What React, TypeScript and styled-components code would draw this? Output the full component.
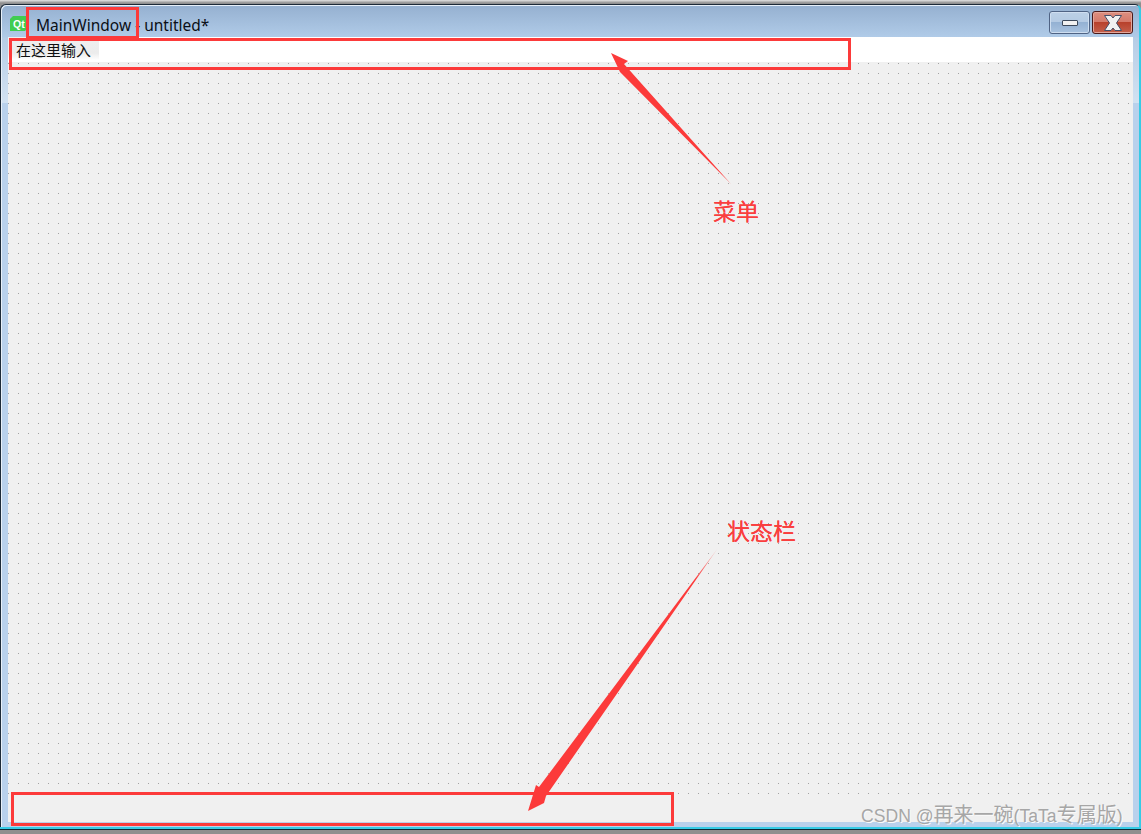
import React from 'react';
import styled, { createGlobalStyle } from 'styled-components';

const GlobalStyle = createGlobalStyle`
  html, body {
    margin: 0;
    padding: 0;
    background: #9a9a9a;
  }
  body {
    font-family: "Liberation Sans", "Noto Sans CJK SC", sans-serif;
  }
`;

const Page = styled.div`
  position: relative;
  width: 1141px;
  height: 834px;
  overflow: hidden;
  background: linear-gradient(#e4e4e4 0, #8f8f8f 3px);
  padding-top: 4px;
  box-sizing: border-box;
`;

const Frame = styled.div`
  width: 1141px;
  height: 826px;
  box-sizing: border-box;
  display: flex;
  flex-direction: column;
  border: 1px solid #1d2a38;
  border-right: 2px solid #36cbe6;
  border-radius: 6px 6px 0 0;
  box-shadow: inset 1px 1px 0 0 #e8f0f8;
  background: linear-gradient(
    #95b0d0 0,
    #b0cbe8 32px,
    #b6cde6 33px,
    #d2e2f2 98px,
    #b9d1ec 98px,
    #b9d1ec 100%
  );
  padding: 1px 6px 0 7px;
`;

const TitleBar = styled.div`
  height: 31px;
  flex: none;
  display: flex;
  justify-content: space-between;
  padding-left: 2px;
  box-sizing: border-box;
`;

const TitleLeft = styled.div`
  align-self: flex-end;
  display: flex;
  align-items: center;
  gap: 8px;
  padding-bottom: 4px;
`;

const TitleText = styled.span`
  font-family: "Noto Sans", sans-serif;
  font-size: 15.5px;
  line-height: 15px;
  color: #0b0f16;
  margin-top: 4px;
`;

const WindowButtons = styled.div`
  align-self: flex-start;
  display: flex;
  gap: 2px;
  margin-top: 5px;
`;

const WindowButton = styled.div<{ $close?: boolean }>`
  width: 41px;
  height: 23px;
  box-sizing: border-box;
  display: flex;
  align-items: center;
  justify-content: center;
  border: 1px solid ${(p) => (p.$close ? '#4a1a1a' : '#4f6384')};
  border-radius: 3px;
  box-shadow: inset 0 0 0 1px ${(p) => (p.$close ? '#e3a79c' : '#cfdef0')};
  background: ${(p) =>
    p.$close
      ? 'linear-gradient(#dd8f80 0, #d4796a 48%, #b8412c 50%, #c4604c 100%)'
      : 'linear-gradient(#bcd0e6 0, #b4cae3 48%, #94b1d3 50%, #a9c3e0 100%)'};
`;

const MinimizeGlyph = styled.div`
  width: 16px;
  height: 6px;
  box-sizing: border-box;
  background: #f2f2f2;
  border: 1px solid #3d4a5c;
  border-radius: 1px;
`;

const Client = styled.div`
  flex: 1;
  display: flex;
  flex-direction: column;
  margin-bottom: 7px;
  min-height: 0;
`;

const MenuBar = styled.div`
  height: 25px;
  flex: none;
  background: #ffffff;
  display: flex;
`;

const MenuInput = styled.div`
  height: 23px;
  width: 91px;
  box-sizing: border-box;
  padding: 4px 0 0 8px;
  font-family: "Noto Sans CJK SC", sans-serif;
  font-size: 15px;
  line-height: 18px;
  color: #101010;
  background: linear-gradient(#efefef 0, #ececec 70%, #ffffff 100%);
`;

const Canvas = styled.div`
  flex: 1;
  background-color: #f0f0f0;
  background-image: radial-gradient(circle at 0.5px 0.5px, #a2a2a2 0.7px, transparent 0.7px);
  background-size: 10px 10px;
  background-position: 0 1px;
`;

const StatusBar = styled.div`
  height: 28px;
  flex: none;
  background: #f0f0f0;
`;

const BottomEdge = styled.div`
  position: absolute;
  left: 0;
  right: 0;
  top: 827px;
  height: 3px;
  background: linear-gradient(#36cbe6 0, #36cbe6 2px, #0e2a38 2px);
`;

const RedBox = styled.div<{ $x: number; $y: number; $w: number; $h: number }>`
  position: absolute;
  left: ${(p) => p.$x}px;
  top: ${(p) => p.$y}px;
  width: ${(p) => p.$w}px;
  height: ${(p) => p.$h}px;
  box-sizing: border-box;
  border: 3px solid #fc3a3a;
`;

const Arrows = styled.svg`
  position: absolute;
  left: 0;
  top: 0;
  width: 1141px;
  height: 834px;
  pointer-events: none;
`;

const Note = styled.div<{ $x: number; $y: number }>`
  position: absolute;
  left: ${(p) => p.$x}px;
  top: ${(p) => p.$y}px;
  font-family: "Noto Sans CJK SC", sans-serif;
  font-size: 23px;
  line-height: 30px;
  color: #fa3e3e;
  text-shadow: 0 0 0.5px #fa3e3e;
`;

const Watermark = styled.div`
  position: absolute;
  left: 861px;
  top: 802px;
  font-family: "Liberation Sans", sans-serif;
  font-size: 17.6px;
  line-height: 24px;
  color: #a6a6a6;
  text-shadow: 1px 1px 0 #fafafa;
  white-space: nowrap;
`;

const WatermarkCjk = styled.span`
  font-family: "Noto Sans CJK SC", sans-serif;
  font-size: 20px;
`;

const GlyphSvg = styled.svg`
  display: block;
`;

function QtLogo() {
  return (
    <GlyphSvg width="18" height="15" viewBox="0 0 18 15">
      <path d="M3 0H18V12L15 15H0V3Z" fill="#41cd52" />
      <text x="3" y="11.5" fontFamily="Liberation Sans" fontSize="10.5" fontWeight="bold" fill="#ffffff">
        Qt
      </text>
    </GlyphSvg>
  );
}

function CloseGlyph() {
  return (
    <GlyphSvg width="20" height="18" viewBox="0 0 20 18">
      <path
        d="M1.5 1.5H8L10 4L12 1.5H18.5L13.5 9L18.5 16.5H12L10 14L8 16.5H1.5L6.5 9Z"
        fill="#f1f1f1"
        stroke="#44506a"
        strokeWidth="1"
        strokeLinejoin="round"
      />
    </GlyphSvg>
  );
}

export default function App() {
  return (
    <>
      <GlobalStyle />
      <Page>
        <Frame>
          <TitleBar>
            <TitleLeft>
              <QtLogo />
              <TitleText>MainWindow - untitled*</TitleText>
            </TitleLeft>
            <WindowButtons>
              <WindowButton>
                <MinimizeGlyph />
              </WindowButton>
              <WindowButton $close>
                <CloseGlyph />
              </WindowButton>
            </WindowButtons>
          </TitleBar>
          <Client>
            <MenuBar>
              <MenuInput>在这里输入</MenuInput>
            </MenuBar>
            <Canvas />
            <StatusBar />
          </Client>
        </Frame>
        <BottomEdge />
        <RedBox $x={26} $y={7} $w={113} $h={32} />
        <RedBox $x={9} $y={38} $w={842} $h={32} />
        <RedBox $x={11} $y={792} $w={663} $h={34} />
        <Arrows viewBox="0 0 1141 834">
          <defs>
            <linearGradient id="fade" gradientUnits="userSpaceOnUse" x1="718" y1="548" x2="695" y2="580">
              <stop offset="0" stopColor="#fc3a3a" stopOpacity="0.2" />
              <stop offset="1" stopColor="#fc3a3a" />
            </linearGradient>
          </defs>
          <path d="M611 53L628 61L624 64L731 184L620 72Z" fill="#fc3a3a" />
          <path d="M718 548L546 796L544 803L528 811L536 785L539 787Z" fill="url(#fade)" />
        </Arrows>
        <Note $x={713} $y={195}>菜单</Note>
        <Note $x={727} $y={515}>状态栏</Note>
        <Watermark>
          CSDN @<WatermarkCjk>再来一碗</WatermarkCjk>(TaTa<WatermarkCjk>专属版</WatermarkCjk>)
        </Watermark>
      </Page>
    </>
  );
}
